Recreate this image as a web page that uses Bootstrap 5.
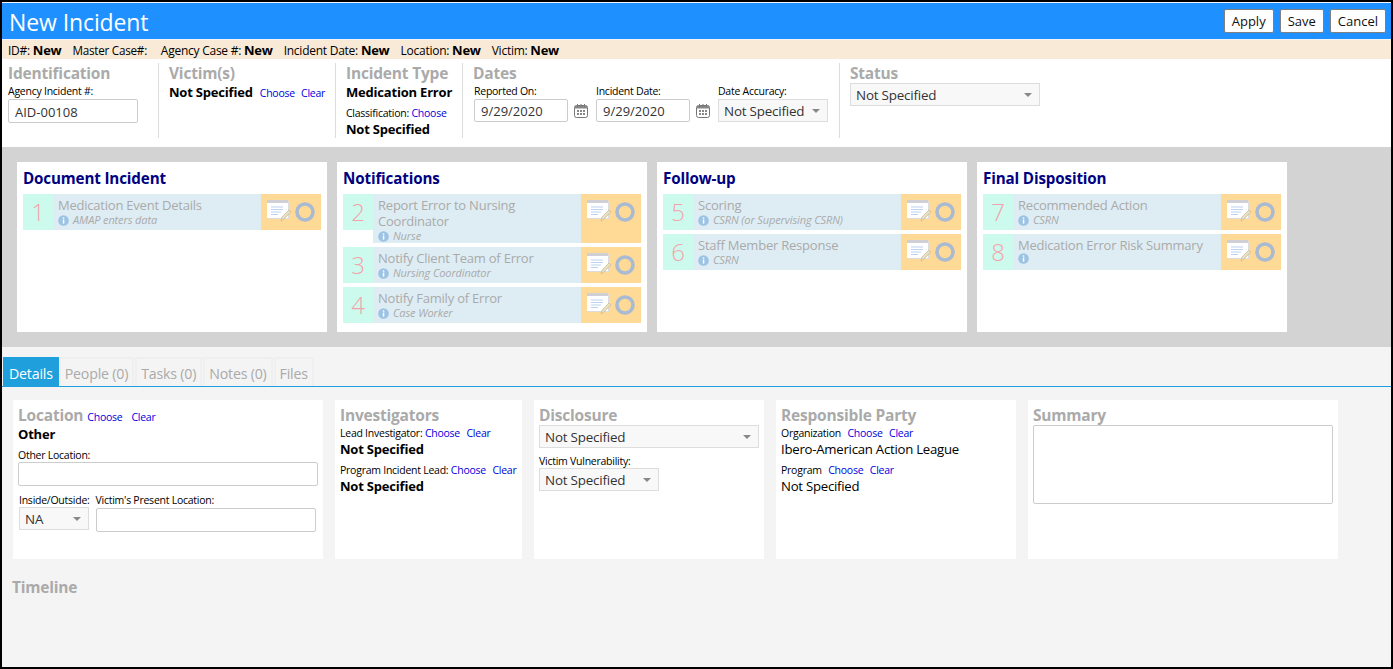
<!DOCTYPE html>
<html lang="en">
<head>
<meta charset="utf-8">
<title>New Incident</title>
<link href="https://cdn.jsdelivr.net/npm/bootstrap@5.3.0/dist/css/bootstrap.min.css" rel="stylesheet">
<style>
html,body{height:100%;overflow:hidden}
body{font-family:"Open Sans","Noto Sans",sans-serif;font-size:13px;color:#000;letter-spacing:-.25px;background:#fff}
.frame{height:669px;border:2px solid #000;background:#f4f4f4;display:flex;flex-direction:column;overflow:hidden}
.titlebar{background:#1e90ff;height:36px;margin-top:1px;padding:0 5px 0 7px;flex:none}
.titlebar h1{font-size:23px;font-weight:400;color:#fff;margin:1px 0 0;letter-spacing:-.1px;line-height:36px}
.act{font-size:13px;line-height:1;height:24px;padding:0 7px;background:#fff;border:1px solid #808080;border-radius:2px;color:#111}
.act:hover{background:#fff;color:#111}
.acts{gap:6px}
.infobar{background:#f9ead7;height:19px;margin-top:1px;padding-left:6px;font-size:12px;line-height:20px;gap:11px;flex:none;white-space:nowrap}
.infobar b{font-size:13px;font-weight:700}
.mc{font-size:11.7px}
.headpanel{background:#fff;height:88px;padding:4px 0 9px 0;flex:none}
.hsec{padding-left:6px;height:75px;flex:none}
.hsec+.hsec{border-left:1px solid #ddd;padding-left:10px}
.w-id{width:156px}.w-vi{width:177px}.w-ty{width:127px}.w-da{width:377px}.w-st{width:200px}
.sect{font-size:15.5px;font-weight:700;color:#aaa;line-height:20px;letter-spacing:-.2px;margin:0}
.cap{font-size:10.5px;line-height:13px;margin:0;display:block;white-space:nowrap;letter-spacing:-.25px}
.caph{line-height:14px}
.capgap{margin:2px 0 1px}
.strong{font-size:13px;font-weight:700;line-height:18px;white-space:nowrap;letter-spacing:-.2px}
.plain{font-size:13.2px;line-height:18px;white-space:nowrap}
.lnk{font-size:10.5px;color:#00d;text-decoration:none;letter-spacing:-.25px}
.nudge{margin-left:4px}
.clearv{margin-left:3px}
.clearl{margin-left:5px}
.typecap{margin-top:6px}
.fld{height:24px;min-height:0;padding:1px 6px 0;font-size:13px;border:1px solid #ccc;border-radius:2px;color:#333;box-shadow:none}
.fldd{height:23px;padding-top:0}
.sel{height:23px;min-height:0;padding:1px 5px 0;font-size:13.4px;border:1px solid #ddd;border-radius:0;background-color:#f8f8f8;color:#333;letter-spacing:-.2px;background-image:url("data:image/svg+xml,%3Csvg xmlns='http://www.w3.org/2000/svg' width='8' height='4'%3E%3Cpath d='M0 0h8L4 4z' fill='%23888'/%3E%3C/svg%3E");background-size:8px 4px;background-position:right 7px center}
.datesrow{margin-left:1px}
.calw{width:14px;height:14px;margin:0 8px 4px 6px;flex:none}
.band{background:#d3d3d3;height:200px;padding:15px;gap:10px;flex:none}
.stage{background:#fff;width:310px;height:170px;padding:6px;flex:none}
.stage h2{font-size:15.2px;font-weight:700;color:#000080;line-height:20px;margin:0 0 6px;letter-spacing:-.15px}
.step{width:298px;margin-bottom:4px;align-items:stretch}
.nm{width:30px;height:36px;background:#ccfbed;color:#f4a3ae;font-size:24px;font-weight:300;line-height:35px;text-align:center;flex:none}
.tx{width:208px;background:#deedf4;padding:3px 5px 0;min-height:36px;flex:none}
.ttl{font-size:13px;line-height:16px;color:#aaa;letter-spacing:-.22px;display:block}
.who{font-size:11px;line-height:14px;font-style:italic;color:#aaa;display:flex;align-items:center;gap:4px;white-space:nowrap;letter-spacing:-.12px}
.ac{width:60px;background:#ffd996;flex:none;display:flex;gap:4px;padding:6px 0 0 6px;align-items:flex-start}
.ic{flex:none}
.ringy{margin-top:2px}
.lower{flex:1 1 auto;padding-top:10px}
.tabsrow{border-bottom:1px solid #1f9fdc;padding-left:1px;height:30px;gap:1px;flex-wrap:nowrap}
.tabsrow .nav-link{height:29px;padding:0 4px;border:2px solid #efefef;border-bottom:0;border-radius:0;font-size:14.2px;line-height:29px;color:#aaa;background:transparent;letter-spacing:-.2px}
.tabsrow .nav-link.active{background:#1f9fdc;border-color:#1f9fdc;color:#fff;padding-right:5px;margin-right:-2px}
.cardsrow{padding:13px 0 0 11px;gap:12px}
.pane{background:#fff;height:159px;padding:5px;flex:none}
.p-loc{width:310px}.p-inv{width:187px}.p-dis{width:230px}.p-res{width:240px}.p-sum{width:310px}
.sectm{margin-bottom:1px}
.sub{margin-top:5px}
.locrow{height:20px;gap:4px}
.gapl{margin-top:6px}
.locgrid{gap:6px;margin:8px 0 0 1px}
.fldlow{margin-top:1px}
.timeline{margin:18px 0 0 10px}
textarea.fld{resize:none;display:block;height:79px}
</style>
</head>
<body>
<svg width="0" height="0" class="position-absolute">
 <defs>
  <symbol id="note" viewBox="0 0 24 22">
   <rect x="1" y="1" width="21" height="18" fill="#dcdce0"/>
   <rect x="0" y="0" width="21" height="18" fill="#fff"/>
   <rect x="0" y="0" width="21" height="3" fill="#cfcfd6"/>
   <path d="M4 7h12M4 9.500h12M4 12h10M4 14.500h7" stroke="#bcd2ee" stroke-width="1"/>
   <path d="M14 21l1-4 7-7 2 2-7 7z" fill="#eadfbd" stroke="#b9b39c" stroke-width=".6"/>
  </symbol>
  <symbol id="ring" viewBox="0 0 20 20">
   <circle cx="10" cy="10" r="8" fill="none" stroke="#a9bbd2" stroke-width="3.6"/>
  </symbol>
  <symbol id="info" viewBox="0 0 11 11">
   <circle cx="5.500" cy="5.500" r="5.300" fill="#9cc3e4"/>
   <rect x="4.800" y="4.600" width="1.500" height="4" fill="#fff"/>
   <rect x="4.800" y="2.400" width="1.500" height="1.400" fill="#fff"/>
  </symbol>
  <symbol id="cal" viewBox="0 0 14 14">
   <rect x=".5" y="1.500" width="13" height="12" rx="2" fill="#fff" stroke="#777"/>
   <rect x="1" y="2" width="12" height="2.500" fill="#888"/>
   <path d="M3.500 0v3M7 0v3M10.500 0v3" stroke="#777"/>
   <path d="M3 6h2v2H3zM6 6h2v2H6zM9 6h2v2H9zM3 9h2v2H3zM6 9h2v2H6zM9 9h2v2H9z" fill="#888"/>
  </symbol>
 </defs>
</svg>
<div class="frame">
 <div class="titlebar d-flex justify-content-between align-items-center">
  <h1>New Incident</h1>
  <div class="d-flex acts">
   <button type="button" class="btn act">Apply</button>
   <button type="button" class="btn act">Save</button>
   <button type="button" class="btn act">Cancel</button>
  </div>
 </div>
 <div class="infobar d-flex">
  <span>ID#: <b>New</b></span><span class="mc">Master Case#:</span><span>&nbsp;Agency Case #: <b>New</b></span><span>Incident Date: <b>New</b></span><span>Location: <b>New</b></span><span>Victim: <b>New</b></span>
 </div>
 <div class="headpanel d-flex">
  <div class="hsec w-id">
   <p class="sect">Identification</p>
   <label class="cap capgap">Agency Incident #:</label>
   <input class="form-control fld" style="width:130px" value="AID-00108">
  </div>
  <div class="hsec w-vi">
   <p class="sect">Victim(s)</p>
   <div><span class="strong">Not Specified</span> <a class="lnk nudge" href="#">Choose</a> <a class="lnk clearv" href="#">Clear</a></div>
  </div>
  <div class="hsec w-ty">
   <p class="sect">Incident Type</p>
   <div class="strong">Medication Error</div>
   <div class="cap typecap">Classification: <a class="lnk" href="#">Choose</a></div>
   <div class="strong">Not Specified</div>
  </div>
  <div class="hsec w-da">
   <p class="sect">Dates</p>
   <div class="d-flex align-items-end datesrow">
    <div><label class="cap capgap">Reported On:</label><input class="form-control fld fldd" style="width:94px" value="9/29/2020"></div>
    <svg class="calw"><use href="#cal"/></svg>
    <div><label class="cap capgap">Incident Date:</label><input class="form-control fld fldd" style="width:94px" value="9/29/2020"></div>
    <svg class="calw"><use href="#cal"/></svg>
    <div><label class="cap capgap">Date Accuracy:</label><select class="form-select sel" style="width:110px"><option>Not Specified</option></select></div>
   </div>
  </div>
  <div class="hsec w-st">
   <p class="sect">Status</p>
   <select class="form-select sel" style="width:190px"><option>Not Specified</option></select>
  </div>
 </div>
 <div class="band d-flex">
  <div class="stage">
   <h2>Document Incident</h2>
   <div class="step d-flex"><div class="nm">1</div><div class="tx"><span class="ttl">Medication Event Details</span><span class="who"><svg class="ic" width="11" height="11"><use href="#info"/></svg>AMAP enters data</span></div><div class="ac"><svg class="ic" width="24" height="22"><use href="#note"/></svg><svg class="ic ringy" width="20" height="20"><use href="#ring"/></svg></div></div>
  </div>
  <div class="stage">
   <h2>Notifications</h2>
   <div class="step d-flex"><div class="nm">2</div><div class="tx"><span class="ttl">Report Error to Nursing Coordinator</span><span class="who"><svg class="ic" width="11" height="11"><use href="#info"/></svg>Nurse</span></div><div class="ac"><svg class="ic" width="24" height="22"><use href="#note"/></svg><svg class="ic ringy" width="20" height="20"><use href="#ring"/></svg></div></div>
   <div class="step d-flex"><div class="nm">3</div><div class="tx"><span class="ttl">Notify Client Team of Error</span><span class="who"><svg class="ic" width="11" height="11"><use href="#info"/></svg>Nursing Coordinator</span></div><div class="ac"><svg class="ic" width="24" height="22"><use href="#note"/></svg><svg class="ic ringy" width="20" height="20"><use href="#ring"/></svg></div></div>
   <div class="step d-flex"><div class="nm">4</div><div class="tx"><span class="ttl">Notify Family of Error</span><span class="who"><svg class="ic" width="11" height="11"><use href="#info"/></svg>Case Worker</span></div><div class="ac"><svg class="ic" width="24" height="22"><use href="#note"/></svg><svg class="ic ringy" width="20" height="20"><use href="#ring"/></svg></div></div>
  </div>
  <div class="stage">
   <h2>Follow-up</h2>
   <div class="step d-flex"><div class="nm">5</div><div class="tx"><span class="ttl">Scoring</span><span class="who"><svg class="ic" width="11" height="11"><use href="#info"/></svg>CSRN (or Supervising CSRN)</span></div><div class="ac"><svg class="ic" width="24" height="22"><use href="#note"/></svg><svg class="ic ringy" width="20" height="20"><use href="#ring"/></svg></div></div>
   <div class="step d-flex"><div class="nm">6</div><div class="tx"><span class="ttl">Staff Member Response</span><span class="who"><svg class="ic" width="11" height="11"><use href="#info"/></svg>CSRN</span></div><div class="ac"><svg class="ic" width="24" height="22"><use href="#note"/></svg><svg class="ic ringy" width="20" height="20"><use href="#ring"/></svg></div></div>
  </div>
  <div class="stage">
   <h2>Final Disposition</h2>
   <div class="step d-flex"><div class="nm">7</div><div class="tx"><span class="ttl">Recommended Action</span><span class="who"><svg class="ic" width="11" height="11"><use href="#info"/></svg>CSRN</span></div><div class="ac"><svg class="ic" width="24" height="22"><use href="#note"/></svg><svg class="ic ringy" width="20" height="20"><use href="#ring"/></svg></div></div>
   <div class="step d-flex"><div class="nm">8</div><div class="tx"><span class="ttl">Medication Error Risk Summary</span><span class="who"><svg class="ic" width="11" height="11"><use href="#info"/></svg></span></div><div class="ac"><svg class="ic" width="24" height="22"><use href="#note"/></svg><svg class="ic ringy" width="20" height="20"><use href="#ring"/></svg></div></div>
  </div>
 </div>
 <div class="lower">
  <ul class="nav tabsrow">
   <li class="nav-item"><a class="nav-link active" href="#">Details</a></li>
   <li class="nav-item"><a class="nav-link" href="#">People (0)</a></li>
   <li class="nav-item"><a class="nav-link" href="#">Tasks (0)</a></li>
   <li class="nav-item"><a class="nav-link" href="#">Notes (0)</a></li>
   <li class="nav-item"><a class="nav-link" href="#">Files</a></li>
  </ul>
  <div class="cardsrow d-flex">
   <div class="pane p-loc">
    <div class="d-flex align-items-baseline locrow"><span class="sect">Location</span><a class="lnk" href="#">Choose</a><a class="lnk clearl" href="#">Clear</a></div>
    <div class="strong">Other</div>
    <label class="cap gapl">Other Location:</label>
    <input class="form-control fld" style="width:300px">
    <div class="d-flex locgrid">
     <div><label class="cap">Inside/Outside:</label><select class="form-select sel" style="width:70px"><option>NA</option></select></div>
     <div><label class="cap">Victim's Present Location:</label><input class="form-control fld fldlow" style="width:220px"></div>
    </div>
   </div>
   <div class="pane p-inv">
    <p class="sect sectm">Investigators</p>
    <div class="cap caph">Lead Investigator: <a class="lnk" href="#">Choose</a> <a class="lnk ms-1" href="#">Clear</a></div>
    <div class="strong">Not Specified</div>
    <div class="cap caph sub">Program Incident Lead: <a class="lnk" href="#">Choose</a> <a class="lnk ms-1" href="#">Clear</a></div>
    <div class="strong">Not Specified</div>
   </div>
   <div class="pane p-dis">
    <p class="sect">Disclosure</p>
    <select class="form-select sel" style="width:220px"><option>Not Specified</option></select>
    <label class="cap caph gapl">Victim Vulnerability:</label>
    <select class="form-select sel" style="width:120px"><option>Not Specified</option></select>
   </div>
   <div class="pane p-res">
    <p class="sect sectm">Responsible Party</p>
    <div class="cap caph">Organization <a class="lnk ms-1" href="#">Choose</a> <a class="lnk ms-1" href="#">Clear</a></div>
    <div class="plain">Ibero-American Action League</div>
    <div class="cap caph sub">Program <a class="lnk ms-1" href="#">Choose</a> <a class="lnk ms-1" href="#">Clear</a></div>
    <div class="plain">Not Specified</div>
   </div>
   <div class="pane p-sum">
    <p class="sect">Summary</p>
    <textarea class="form-control fld"></textarea>
   </div>
  </div>
  <p class="sect timeline">Timeline</p>
 </div>
</div>
<script src="https://cdn.jsdelivr.net/npm/bootstrap@5.3.0/dist/js/bootstrap.bundle.min.js"></script>
</body>
</html>
